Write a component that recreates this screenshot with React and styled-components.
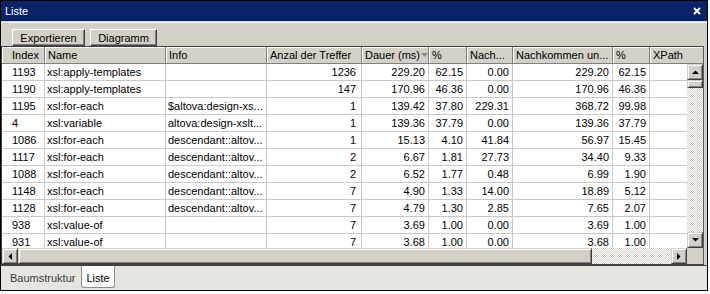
import React from "react";
import styled, { createGlobalStyle } from "styled-components";

const GlobalStyle = createGlobalStyle`
  html, body { margin: 0; padding: 0; background: #fff; }
  body { font-family: "Liberation Sans", Arial, sans-serif; font-size: 11px; color: #000; }
`;

const COLS = "43px 121px 101px 95px 67px 38px 46px 100px 37px 120px";

const columns = [
  { title: "Index", num: false, first: true },
  { title: "Name", num: false },
  { title: "Info", num: false },
  { title: "Anzal der Treffer", num: true, pad: 5 },
  { title: "Dauer (ms)", num: true, sorted: true },
  { title: "%", num: true },
  { title: "Nach...", num: true },
  { title: "Nachkommen un...", num: true },
  { title: "%", num: true },
  { title: "XPath", num: false },
];

const rows = [
  ["1193", "xsl:apply-templates", "", "1236", "229.20", "62.15", "0.00", "229.20", "62.15", ""],
  ["1190", "xsl:apply-templates", "", "147", "170.96", "46.36", "0.00", "170.96", "46.36", ""],
  ["1195", "xsl:for-each", "$altova:design-xs...", "1", "139.42", "37.80", "229.31", "368.72", "99.98", ""],
  ["4", "xsl:variable", "altova:design-xslt...", "1", "139.36", "37.79", "0.00", "139.36", "37.79", ""],
  ["1086", "xsl:for-each", "descendant::altov...", "1", "15.13", "4.10", "41.84", "56.97", "15.45", ""],
  ["1117", "xsl:for-each", "descendant::altov...", "2", "6.67", "1.81", "27.73", "34.40", "9.33", ""],
  ["1088", "xsl:for-each", "descendant::altov...", "2", "6.52", "1.77", "0.48", "6.99", "1.90", ""],
  ["1148", "xsl:for-each", "descendant::altov...", "7", "4.90", "1.33", "14.00", "18.89", "5.12", ""],
  ["1128", "xsl:for-each", "descendant::altov...", "7", "4.79", "1.30", "2.85", "7.65", "2.07", ""],
  ["938", "xsl:value-of", "", "7", "3.69", "1.00", "0.00", "3.69", "1.00", ""],
  ["931", "xsl:value-of", "", "7", "3.68", "1.00", "0.00", "3.68", "1.00", ""],
];

const Window = styled.div`
  width: 708px;
  height: 291px;
  box-sizing: border-box;
  border: 1px solid #000;
  background: #d4d0c8;
  display: flex;
  flex-direction: column;
`;

const TitleBar = styled.div`
  height: 20px;
  flex: none;
  background: #0a246a;
  color: #fff;
  display: flex;
  align-items: center;
  justify-content: space-between;
  padding: 0 6px 0 4px;
`;

const Toolbar = styled.div`
  height: 25px;
  flex: none;
  box-sizing: border-box;
  display: flex;
  gap: 5px;
  padding: 8px 0 0 11px;
  box-shadow: inset 0 1px 0 #d4d0c8, inset 0 2px 0 #fff;
`;

const Button = styled.button`
  width: ${(p) => p.$w}px;
  height: 17px;
  box-sizing: border-box;
  margin: 0;
  padding: 0;
  font: inherit;
  color: #000;
  background: #d4d0c8;
  border: 1px solid;
  border-color: #fff #404040 #404040 #fff;
  box-shadow: inset -1px -1px 0 #808080;
  line-height: 14px;
`;

const GridFrame = styled.div`
  height: 219px;
  flex: none;
  margin-right: 3px;
  box-sizing: border-box;
  border: 1px solid #404040;
  border-right-color: #5a5a5a;
  display: grid;
  grid-template-columns: 1fr 16px;
  grid-template-rows: 17px 184px 16px;
  background: #fff;
`;

const Header = styled.div`
  grid-column: 1 / 3;
  overflow: hidden;
  display: grid;
  grid-template-columns: ${COLS};
  background: #d4d0c8;
`;

const HeaderCell = styled.div`
  box-sizing: border-box;
  padding-left: ${(p) => (p.$first ? 10 : 3)}px;
  border-right: 1px solid #808080;
  border-bottom: 1px solid #808080;
  box-shadow: inset 1px 1px 0 #fff;
  line-height: 16px;
  white-space: nowrap;
  overflow: hidden;
  display: flex;
  align-items: center;
`;

const SortArrow = styled.svg`
  margin-left: 1px;
  flex: none;
`;

const Body = styled.div`
  overflow: hidden;
  background: #fff;
`;

const Row = styled.div`
  display: grid;
  grid-template-columns: ${COLS};
  height: 17px;
`;

const Cell = styled.div`
  box-sizing: border-box;
  border-right: 1px solid #c8c8c8;
  border-bottom: 1px solid #c8c8c8;
  line-height: 16px;
  white-space: nowrap;
  overflow: hidden;
  text-align: ${(p) => (p.$num ? "right" : "left")};
  padding: ${(p) => (p.$num ? `0 ${p.$pad || 3}px 0 0` : `0 0 0 ${p.$first ? 10 : 2}px`)};
`;

const checker = `
  background-color: #fff;
  background-image: repeating-conic-gradient(#d4d0c8 0 25%, #fff 0 50%);
  background-size: 2px 2px;
`;

const VScroll = styled.div`
  grid-column: 2;
  grid-row: 2;
  display: flex;
  flex-direction: column;
  ${checker}
`;

const HScroll = styled.div`
  grid-column: 1;
  grid-row: 3;
  display: flex;
  ${checker}
`;

const Corner = styled.div`
  grid-column: 2;
  grid-row: 3;
  background: #d4d0c8;
`;

const ScrollButton = styled.div`
  width: 16px;
  height: 16px;
  flex: none;
  box-sizing: border-box;
  background: #d4d0c8;
  border: 1px solid;
  border-color: #d4d0c8 #404040 #404040 #d4d0c8;
  box-shadow: inset 1px 1px 0 #fff, inset -1px -1px 0 #808080;
  display: flex;
  align-items: center;
  justify-content: center;
  margin-top: ${(p) => (p.$end ? "auto" : 0)};
  margin-left: ${(p) => (p.$endH ? "auto" : 0)};
`;

const Thumb = styled.div`
  flex: none;
  box-sizing: border-box;
  width: ${(p) => (p.$horizontal ? `${p.$size}px` : "16px")};
  height: ${(p) => (p.$horizontal ? "16px" : `${p.$size}px`)};
  background: #d4d0c8;
  border: 1px solid;
  border-color: #d4d0c8 #404040 #404040 #d4d0c8;
  box-shadow: inset 1px 1px 0 #fff, inset -1px -1px 0 #808080;
`;

const TabStrip = styled.div`
  flex: 1;
  border-top: 1px solid #404040;
  background: #e6e4de;
  display: flex;
  align-items: flex-start;
  padding-left: 3px;
`;

const Tab = styled.div`
  height: 22px;
  box-sizing: border-box;
  line-height: 24px;
  padding: 0 ${(p) => (p.$active ? "4px" : "6px")};
  color: ${(p) => (p.$active ? "#000" : "#3c3c3c")};
  background: ${(p) => (p.$active ? "#fff" : "transparent")};
  border: ${(p) => (p.$active ? "1px solid #8c8c8c" : "none")};
  border-top: none;
  border-radius: 0 0 3px 3px;
`;

const Arrow = ({ dir }) => {
  const pts = {
    up: "0,4 7,4 3.5,0.5",
    down: "0,0 7,0 3.5,3.5",
    left: "4,0 4,7 0.5,3.5",
    right: "0,0 0,7 3.5,3.5",
  }[dir];
  const vertical = dir === "up" || dir === "down";
  return (
    <svg width={vertical ? 7 : 4} height={vertical ? 4 : 7}>
      <polygon points={pts} fill="#000" />
    </svg>
  );
};

const App = () => (
  <>
    <GlobalStyle />
    <Window>
      <TitleBar>
        <span>Liste</span>
        <svg width="8" height="8" viewBox="0 0 8 8">
          <path d="M1 1 L7 7 M7 1 L1 7" stroke="#fff" strokeWidth="1.8" />
        </svg>
      </TitleBar>
      <Toolbar>
        <Button $w={73}>Exportieren</Button>
        <Button $w={67}>Diagramm</Button>
      </Toolbar>
      <GridFrame>
        <Header>
          {columns.map((c, i) => (
            <HeaderCell key={i} $first={c.first}>
              {c.title}
              {c.sorted && (
                <SortArrow width="7" height="5">
                  <polygon points="0,0 7,0 3.5,4" fill="#8c8c8c" />
                </SortArrow>
              )}
            </HeaderCell>
          ))}
        </Header>
        <Body>
          {rows.map((r, i) => (
            <Row key={i}>
              {r.map((v, j) => (
                <Cell key={j} $num={columns[j].num} $pad={columns[j].pad} $first={columns[j].first}>
                  {v}
                </Cell>
              ))}
            </Row>
          ))}
        </Body>
        <VScroll>
          <ScrollButton>
            <Arrow dir="up" />
          </ScrollButton>
          <Thumb $size={8} />
          <ScrollButton $end>
            <Arrow dir="down" />
          </ScrollButton>
        </VScroll>
        <HScroll>
          <ScrollButton>
            <Arrow dir="left" />
          </ScrollButton>
          <Thumb $horizontal $size={574} />
          <ScrollButton $endH>
            <Arrow dir="right" />
          </ScrollButton>
        </HScroll>
        <Corner />
      </GridFrame>
      <TabStrip>
        <Tab>Baumstruktur</Tab>
        <Tab $active>Liste</Tab>
      </TabStrip>
    </Window>
  </>
);

export default App;
